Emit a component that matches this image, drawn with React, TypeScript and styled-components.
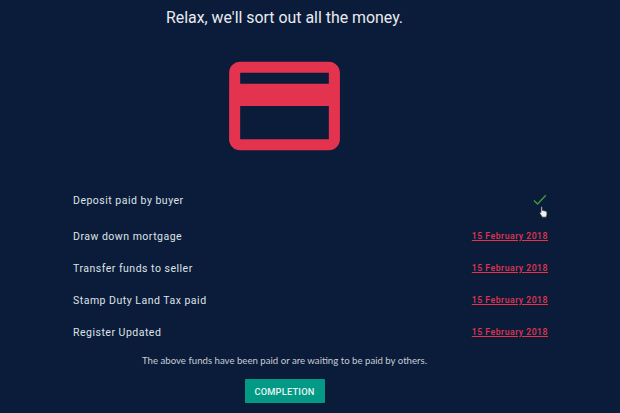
import { FC } from "react";
import styled, { createGlobalStyle } from "styled-components";

const GlobalStyle = createGlobalStyle`
  html, body {
    margin: 0;
    padding: 0;
    background: #0a1c3a;
    overflow: hidden;
  }
`;

const Page = styled.div`
  width: 569px;
  height: 413px;
  color: #e4e6ea;
  font-family: Roboto, "Liberation Sans", sans-serif;
  display: flex;
  flex-direction: column;
  align-items: center;
`;

const Title = styled.h1`
  margin: 7px 0 0;
  font-size: 15.9px;
  line-height: 22px;
  font-weight: 400;
  color: #e9ebee;
`;

const CardIcon = styled.svg`
  display: block;
  width: 133px;
  height: 134px;
  margin-top: 10px;
  fill: #e4334f;
`;

const List = styled.ul`
  list-style: none;
  align-self: flex-start;
  width: 475px;
  margin: 7px 0 0 73px;
  padding: 0;
`;

const Row = styled.li<{ $tall?: boolean }>`
  height: ${(p) => (p.$tall ? 40 : 32)}px;
  display: flex;
  align-items: center;
  justify-content: space-between;
`;

const Label = styled.span`
  font-size: 10.5px;
  letter-spacing: 0.5px;
  color: #dfe2e7;
`;

const DateLink = styled.a`
  font-size: 8.7px;
  font-weight: 500;
  letter-spacing: 0.5px;
  color: #e4334f;
  text-decoration: underline;
`;

const Tick = styled.div`
  position: relative;
  width: 14px;
  height: 12px;
  margin-right: 1px;

  svg {
    display: block;
  }
`;

const Cursor = styled.svg`
  position: absolute;
  left: 6px;
  top: 12px;
  width: 9px;
  height: 12px;
`;

const Caption = styled.p`
  margin: 5px 0 0;
  font-family: Lato, "Open Sans", sans-serif;
  font-size: 9.65px;
  line-height: 14px;
  color: #c7ccd4;
`;

const Action = styled.button`
  margin-top: 12px;
  width: 80px;
  height: 24px;
  padding: 0;
  border: 0;
  border-radius: 1px;
  background: #029a85;
  color: #e8f5f3;
  font-family: Roboto, "Liberation Sans", sans-serif;
  font-size: 9.3px;
  font-weight: 500;
  letter-spacing: 0.2px;
`;

type Step = { label: string; date?: string };

const steps: Step[] = [
  { label: "Deposit paid by buyer" },
  { label: "Draw down mortgage", date: "15 February 2018" },
  { label: "Transfer funds to seller", date: "15 February 2018" },
  { label: "Stamp Duty Land Tax paid", date: "15 February 2018" },
  { label: "Register Updated", date: "15 February 2018" },
];

const App: FC = () => (
  <Page>
    <GlobalStyle />
    <Title>Relax, we'll sort out all the money.</Title>
    <CardIcon viewBox="0 0 24 24">
      <path d="M20 4H4c-1.11 0-1.99.89-1.99 2L2 18c0 1.11.89 2 2 2h16c1.11 0 2-.89 2-2V6c0-1.11-.89-2-2-2zm0 14H4v-6h16v6zm0-10H4V6h16v2z" />
    </CardIcon>
    <List>
      {steps.map(({ label, date }) => (
        <Row key={label} $tall={!date}>
          <Label>{label}</Label>
          {date ? (
            <DateLink>{date}</DateLink>
          ) : (
            <Tick>
              <svg width="14" height="12" viewBox="0 0 14 12" fill="none">
                <path d="M1 6.5 L4.6 10 L12.8 1.2" stroke="#3f9a3c" strokeWidth="1.4" />
              </svg>
              <Cursor viewBox="0 0 10 13">
                <path
                  d="M2.2 1.2c0-.9 1.4-.9 1.4 0v3.4l3.6.9c1 .3 1.6.9 1.6 1.9v2.2L8 12.2H3.6L.9 8c-.5-.9.6-1.6 1.3-.8v-6z"
                  fill="#f2f2f2"
                  stroke="#20242c"
                  strokeWidth="0.7"
                />
              </Cursor>
            </Tick>
          )}
        </Row>
      ))}
    </List>
    <Caption>The above funds have been paid or are waiting to be paid by others.</Caption>
    <Action>COMPLETION</Action>
  </Page>
);

export default App;
